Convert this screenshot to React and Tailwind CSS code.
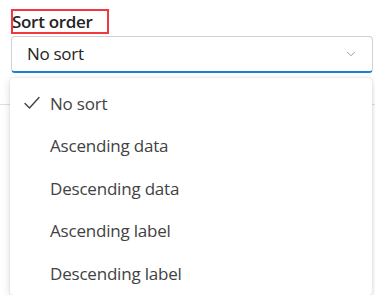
import { ChevronDown } from "lucide-react";

const options = ["No sort", "Ascending data", "Descending data", "Ascending label", "Descending label"];

export default function App() {
  return (
    <div
      className="relative w-[375px] h-[295px] overflow-hidden bg-white text-[#242424]"
      style={{ fontFamily: '"Open Sans", "Noto Sans", sans-serif' }}
    >
      <div className="pl-[11px] pr-[2px] pt-[9px]">
        <div className="relative h-[25px] w-[98px]">
          <span className="block pl-[1px] text-[17px] font-semibold leading-[25px] tracking-[-0.3px] text-[#242424]">
            Sort order
          </span>
          <div className="absolute inset-0 border-2 border-[#f0383f]"></div>
        </div>
        <div className="mt-[2px] flex h-[37px] items-center justify-between rounded-[4px] border border-[#d1d1d1] border-b-2 border-b-[#1d7fd0] pl-[15px] pr-[14px]">
          <span className="text-[17px] tracking-[-0.3px] text-[#242424]">No sort</span>
          <ChevronDown className="h-[14px] w-[14px] text-[#8a8a8a]" strokeWidth={1.5} />
        </div>
      </div>
      <div className="mt-[31px] border-t border-[#e0e0e0]"></div>

      <div className="absolute left-[10px] top-[78px] w-[362px] rounded-[4px] bg-white pt-[4px] shadow-[0_2px_8px_rgba(0,0,0,0.14),0_0_2px_rgba(0,0,0,0.12)]">
        {options.map((o, i) => (
          <div key={o} className="flex h-[42.5px] items-center">
            <div className="flex w-[40px] pl-[14px]">
              {i === 0 && (
                <svg width="16" height="14" viewBox="0 0 16 14" fill="none" stroke="#424242" strokeWidth="1.4" strokeLinecap="round" strokeLinejoin="round">
                  <path d="M1 7.5 L5.5 12 L15 1.5" />
                </svg>
              )}
            </div>
            <span className="text-[17px] tracking-[-0.2px] text-[#424242]">{o}</span>
          </div>
        ))}
      </div>
    </div>
  );
}
